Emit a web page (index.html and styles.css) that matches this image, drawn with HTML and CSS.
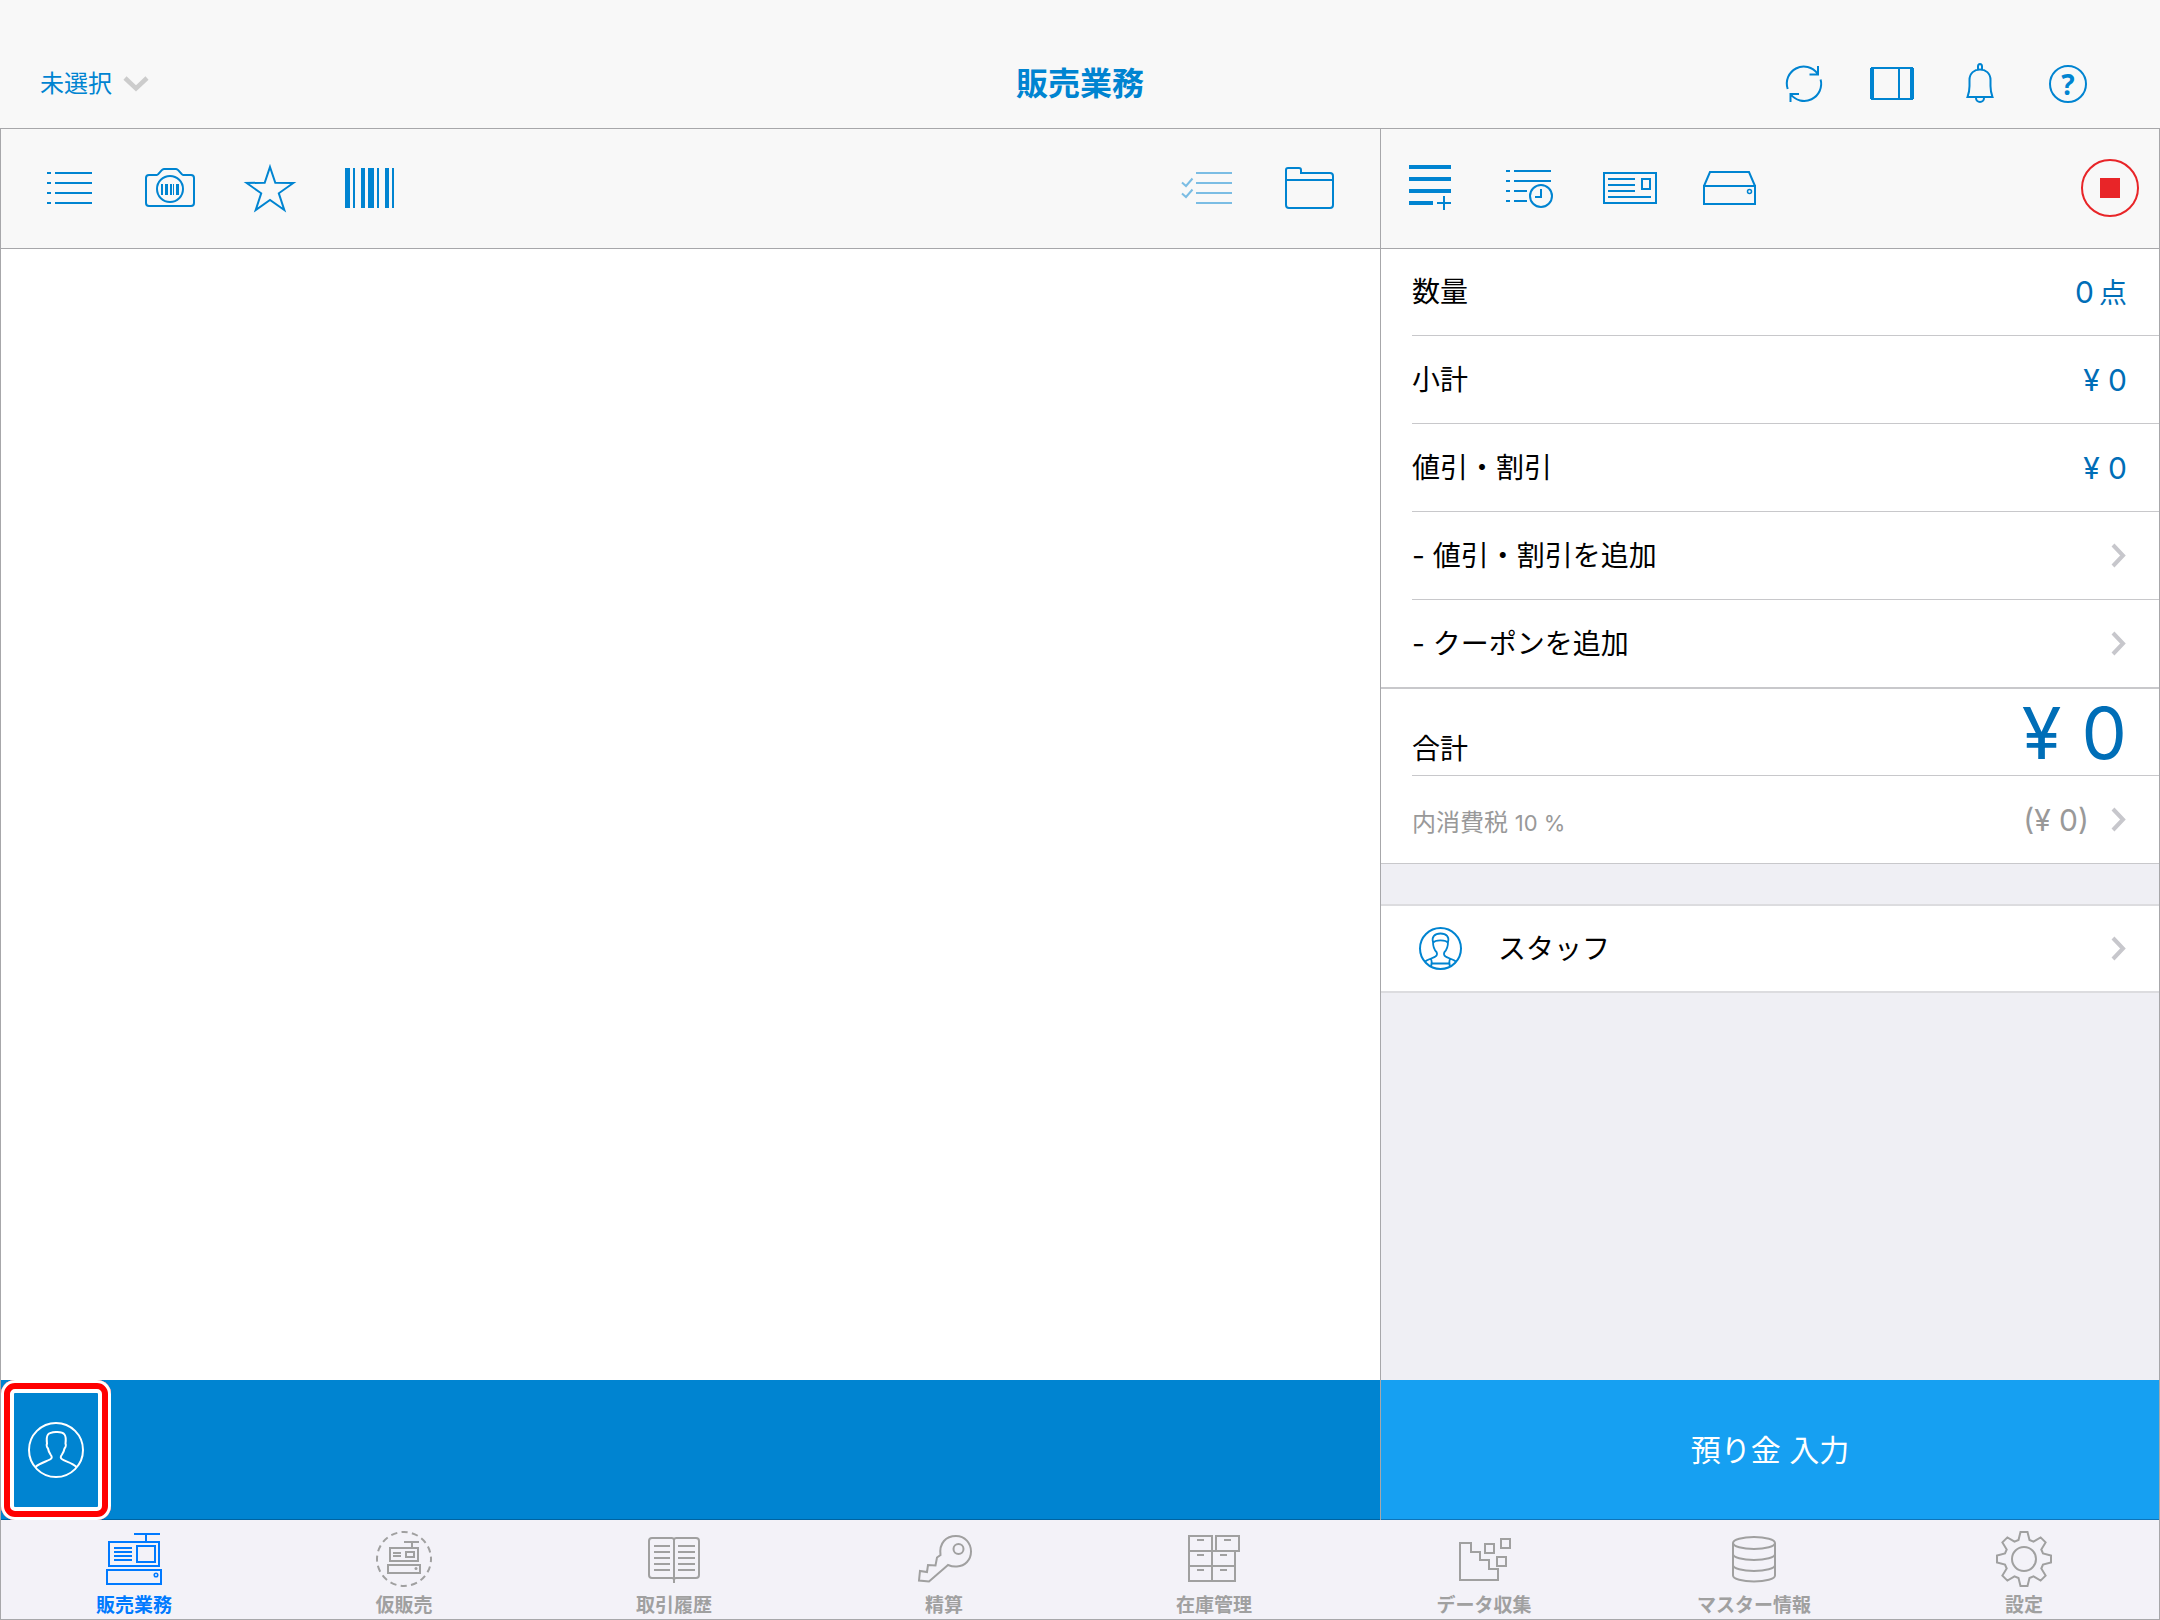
FILE: index.html
```html
<!DOCTYPE html>
<html lang="ja">
<head>
  <meta charset="UTF-8">
  <meta name="viewport" content="width=device-width, initial-scale=1.0">
  <title>販売業務</title>
  <link rel="stylesheet" href="styles.css">
</head>
<body>
  <!-- ヘッダー -->
  <header class="header">
    <button type="button" class="store-select">
      未選択
      <svg class="icon" width="26" height="20" viewBox="0 0 26 20"><path d="M2 4l11 10.500L24 4" stroke="#ccc" stroke-width="4.500"/></svg>
    </button>
    <h1 class="title">販売業務</h1>
    <div class="header-icons">
      <button type="button" aria-label="同期">
        <svg class="icon" width="48" height="48" viewBox="0 0 48 48"><path d="M7.700 29A17 17 0 0 1 37.500 13.500M38 6v8.500h-8.500M40.600 19.500A17 17 0 0 1 10.500 34M10.500 42v-8H19"/></svg>
      </button>
      <button type="button" aria-label="表示切替">
        <svg class="icon" width="48" height="48" viewBox="0 0 48 48"><path d="M4 8h40v31H4zM31 8v31"/><path d="M4 8v31M44 8v31" stroke-width="4"/></svg>
      </button>
      <button type="button" aria-label="お知らせ">
        <svg class="icon" width="48" height="48" viewBox="0 0 48 48"><path d="M22 9.500V6.500a2 2.500 0 0 1 4 0v3M11.500 37c1.500-4 2-7 2-11v-6c0-7 5-10.500 10.500-10.500S34.500 13 34.500 20v6c0 4 .5 7 2 11zM20 38a4 4 0 0 0 8 0"/></svg>
      </button>
      <button type="button" aria-label="ヘルプ">
        <svg class="icon" width="48" height="48" viewBox="0 0 48 48"><circle cx="24" cy="24" r="18"/><text class="help-mark" x="24" y="35" text-anchor="middle">?</text></svg>
      </button>
    </div>
  </header>

  <main class="main">
    <!-- 左側 : 商品リスト -->
    <section class="cart">
      <div class="toolbar">
        <button type="button" aria-label="リスト">
          <svg class="icon" width="60" height="60" viewBox="0 0 60 60"><path d="M7 15h4M15 15h37M7 25h4M15 25h37M7 35h4M15 35h37M7 45h4M15 45h37"/></svg>
        </button>
        <button type="button" aria-label="カメラ">
          <svg class="icon" width="60" height="60" viewBox="0 0 60 60"><path d="M9 17h8c2 0 4-6 7-6h12c3 0 5 6 7 6h8a3 3 0 0 1 3 3v25a3 3 0 0 1-3 3H9a3 3 0 0 1-3-3V20a3 3 0 0 1 3-3z"/><circle cx="30" cy="31" r="13"/><path class="fill" d="M21 26h2v11h-2zM25 26h3v11h-3zM30 26h2v11h-2zM33 26h1v11h-1zM36 26h3v11h-3z"/></svg>
        </button>
        <button type="button" aria-label="お気に入り">
          <svg class="icon" width="60" height="60" viewBox="0 0 60 60"><path d="M30 9l5.300 15.700 18 .3-14.500 10.300L44.300 52 30 42 15.700 52l5.500-16.700L6.700 25l18-.3z"/></svg>
        </button>
        <button type="button" aria-label="バーコード">
          <svg class="icon" width="60" height="60" viewBox="0 0 60 60"><path class="fill" d="M5 10h5v40H5zM13 10h2v40h-2zM21 10h4v40h-4zM28 10h6v40h-6zM37 10h2v40h-2zM45 10h4v40h-4zM52 10h2v40h-2z"/></svg>
        </button>
        <span class="spacer"></span>
        <button type="button" aria-label="一括選択" disabled>
          <svg class="icon" width="60" height="60" viewBox="0 0 60 60"><path d="M16 15h36M16 25h36M16 35h36M16 45h36"/><path d="M2 24.500l4 3.500 6.500-7.500M2 35.500L6 39l6.500-7.500"/></svg>
        </button>
        <button type="button" aria-label="フォルダ">
          <svg class="icon" width="60" height="60" viewBox="0 0 60 60"><path d="M6 12a2 2 0 0 1 2-2h11a2 2 0 0 1 2 2v3h29a3 3 0 0 1 3 3v29a3 3 0 0 1-3 3H9a3 3 0 0 1-3-3zM6 22h47"/></svg>
        </button>
      </div>
      <div class="items"></div>
      <div class="customer-bar">
        <button type="button" class="customer-btn" aria-label="会員">
          <svg class="icon" width="56" height="56" viewBox="0 0 56 56"><circle cx="28" cy="28" r="27"/><path d="M7.500 45c4-4 11-5.500 14.500-7.500 2.500-1.500 2-3 .5-5-1-1.500-2-3-2.500-6-1.500-1.500-1.500-4-1-5-.5-4-.5-7 1-9 2-2.500 13.500-4 16.500 0 1.500 2 1.500 5 1 9 .5 1 .5 3.500-1 5-.5 3-1.500 4.500-2.500 6-1.500 2-2 3.500.5 5C37.500 39.500 44.500 41 48.500 45"/></svg>
        </button>
      </div>
    </section>

    <!-- 右側 : 会計 -->
    <aside class="checkout">
      <div class="toolbar">
        <button type="button" aria-label="明細追加">
          <svg class="icon" width="60" height="60" viewBox="0 0 60 60"><path d="M9 9h42M9 21h42M9 33h42M9 45h24" stroke-width="4"/><path d="M37 45h14M44 38v14"/></svg>
        </button>
        <button type="button" aria-label="保留履歴">
          <svg class="icon" width="60" height="60" viewBox="0 0 60 60"><path d="M6 13h4M14 13h37M6 23h4M14 23h37M6 33h4M14 33h13M6 43h4M14 43h13M41 31v8h-6"/><circle cx="41" cy="38" r="11"/></svg>
        </button>
        <button type="button" aria-label="伝票">
          <svg class="icon" width="60" height="60" viewBox="0 0 60 60"><path d="M4 15h52v30H4zM8 21h27M8 27h27M8 33h27M8 39h43M42 21h8v10h-8z"/></svg>
        </button>
        <button type="button" aria-label="ドロア">
          <svg class="icon" width="60" height="60" viewBox="0 0 60 60"><path d="M4 28v18h51V28zM4 28l6-14h39l6 14"/><circle cx="49.500" cy="33.500" r="2" stroke-width="1.500"/></svg>
        </button>
        <span class="spacer"></span>
        <button type="button" class="stop-btn" aria-label="中止">
          <svg class="icon" width="60" height="60" viewBox="0 0 60 60"><circle cx="30" cy="30" r="28"/><path class="fill" d="M20 20h20v20H20z"/></svg>
        </button>
      </div>

      <div class="group group-lines">
        <div class="row"><span>数量</span><span class="value">0<small>点</small></span></div>
        <div class="row"><span>小計</span><span class="value">¥ 0</span></div>
        <div class="row"><span>値引・割引</span><span class="value">¥ 0</span></div>
        <button type="button" class="row">
          <span>- 値引・割引を追加</span>
          <svg class="icon chevron" width="16" height="25" viewBox="0 0 16 25"><path d="M2 2l10 10.500L2 23"/></svg>
        </button>
        <button type="button" class="row">
          <span>- クーポンを追加</span>
          <svg class="icon chevron" width="16" height="25" viewBox="0 0 16 25"><path d="M2 2l10 10.500L2 23"/></svg>
        </button>
      </div>

      <div class="group">
        <div class="row row-total"><span>合計</span><span class="value total">¥ 0</span></div>
        <button type="button" class="row row-tax">
          <span class="tax">
            <span>内消費税 <small>10 %</small></span>
            <span class="tax-value">(¥ 0)</span>
          </span>
          <svg class="icon chevron" width="16" height="25" viewBox="0 0 16 25"><path d="M2 2l10 10.500L2 23"/></svg>
        </button>
      </div>

      <button type="button" class="staff">
        <svg class="icon" width="43" height="43" viewBox="0 0 43 43"><circle cx="21.500" cy="21.500" r="20.500"/><path d="M14 15c-1.500-5 1.500-8.500 7.500-8.500S30.500 10 29 15c0 5-1.500 8-3.500 10-1 1.500-.5 3.500 1 4.500 3 2 8 2.500 11 5.500M14 15c0 5 1.500 8 3.500 10 1 1.500.5 3.500-1 4.500-3 2-8 2.500-11 5.500M14 16c2-3.500 13-3.500 15 0M12 31c1 3 1 6 0 9M31 31c-1 3-1 6 0 9M12.500 36.500h18" stroke-width="1.800"/></svg>
        <span class="staff-name">スタッフ</span>
        <svg class="icon chevron" width="16" height="25" viewBox="0 0 16 25"><path d="M2 2l10 10.500L2 23"/></svg>
      </button>

      <button type="button" class="pay-btn">預り金 入力</button>
    </aside>
  </main>

  <!-- タブバー -->
  <nav class="tabbar">
    <a href="#" class="tab active">
      <svg class="icon" width="56" height="56" viewBox="0 0 56 56"><path d="M28 3h26M40 4v7M3 11h50v24H3zM8 17h18M8 21h18M8 25h18M8 29h18M31 15h18v16H31zM1 39h54v14H1z"/><circle cx="50" cy="44" r="1.800" stroke-width="1.500"/></svg>
      販売業務
    </a>
    <a href="#" class="tab">
      <svg class="icon" width="56" height="56" viewBox="0 0 56 56"><circle cx="28" cy="28" r="27" stroke-dasharray="6.300 4.300" stroke-dashoffset="3"/><path d="M28 11h15M36 12v5M14 17h28v13H14zM17 22h8M17 25h8M30 21h8v5h-8zM12 34h32v8H12z"/><circle class="fill" cx="40" cy="37.500" r="1.500"/></svg>
      仮販売
    </a>
    <a href="#" class="tab">
      <svg class="icon" width="56" height="56" viewBox="0 0 56 56"><path d="M28 9c0-1.500-1-2-2.500-2H6a3 3 0 0 0-3 3v34a3 3 0 0 0 3 3h20c1.500 0 2 .5 2 2 0-1.500.5-2 2-2h20a3 3 0 0 0 3-3V10a3 3 0 0 0-3-3H30.500C29 7 28 7.500 28 9zM28 9v43M8 15h16M8 21h16M8 27h16M8 33h16M8 39h16M32 15h17M32 21h17M32 27h17M32 33h17M32 39h17"/></svg>
      取引履歴
    </a>
    <a href="#" class="tab">
      <svg class="icon" width="56" height="56" viewBox="0 0 56 56"><path d="M32 34L13 50.500l-10-1L4 40l7 1 1-7 7.500.5L21 26.500l3.500-2.500C23 12 30 5 40 5c9 0 15 7 15 15.500S49 35 41 35.500c-3.500.5-6.500-.5-9-1.500z"/><circle cx="42.500" cy="18" r="5"/></svg>
      精算
    </a>
    <a href="#" class="tab">
      <svg class="icon" width="56" height="56" viewBox="0 0 56 56"><path d="M3 5h23v15H3zM30 5h23v15H30zM3 20h46v30H3zM3 35h46M26 20v30M11 9h7M38 9h7M11 24h7M34 24h7M11 39h7M34 39h7"/></svg>
      在庫管理
    </a>
    <a href="#" class="tab">
      <svg class="icon" width="56" height="56" viewBox="0 0 56 56"><path d="M4 12h11v9h9v8h9v9h9v11H4zM29 13h9v9h-9zM45 8h9v9h-9zM41 26h9v9h-9z"/></svg>
      データ収集
    </a>
    <a href="#" class="tab">
      <svg class="icon" width="56" height="56" viewBox="0 0 56 56"><ellipse cx="28" cy="12" rx="21" ry="6"/><path d="M7 12v32.500c0 3.500 9.500 6 21 6s21-2.500 21-6V12M7 23c0 3.500 9.500 6 21 6s21-2.500 21-6M7 34c0 3.500 9.500 6 21 6s21-2.500 21-6"/></svg>
      マスター情報
    </a>
    <a href="#" class="tab">
      <svg class="icon" width="56" height="56" viewBox="0 0 56 56"><g transform="translate(28 28)"><path d="M-3.500-27H3.500L5.500-19 9.500-17.300 16.600-21.600 21.600-16.600 17.300-9.500 19-5.500 27-3.500V3.500L19 5.500 17.300 9.500 21.600 16.600 16.600 21.600 9.500 17.300 5.500 19 3.500 27H-3.500L-5.500 19-9.500 17.300-16.600 21.600-21.600 16.600-17.300 9.500-19 5.500-27 3.500V-3.500L-19-5.500-17.300-9.500-21.600-16.600-16.600-21.600-9.500-17.300-5.500-19z"/><circle r="12"/></g></svg>
      設定
    </a>
  </nav>
</body>
</html>
```

FILE: styles.css
```css
* {
  box-sizing: border-box;
}

body {
  margin: 0;
  min-height: 100vh;
  display: flex;
  flex-direction: column;
  font-family: Inter, "Noto Sans CJK JP", sans-serif;
  font-size: 28px;
  line-height: 1;
  color: #000;
  background-color: #f8f8f8;
}

button {
  margin: 0;
  padding: 0;
  border: none;
  background: none;
  font: inherit;
  color: inherit;
  cursor: pointer;
}

/* アイコン共通 */
.icon {
  display: block;
  flex: none;
  fill: none;
  stroke: currentColor;
  stroke-width: 2;
}

.icon .fill {
  fill: currentColor;
  stroke: none;
}

.chevron {
  color: #c7c7cc;
  stroke-width: 4;
}

.spacer {
  flex: 1;
}

/* ヘッダー */
.header {
  display: grid;
  grid-template-columns: 1fr auto 1fr;
  align-items: center;
  height: 128px;
  padding: 40px 40px 0;
  color: #0084d1;
}

.store-select {
  display: flex;
  align-items: center;
  justify-self: start;
  gap: 11px;
  font-size: 24px;
}

.title {
  margin: 0;
  font-size: 32px;
  font-weight: bold;
}

.header-icons {
  display: flex;
  justify-content: flex-end;
  padding-right: 8px;
}

.header-icons button {
  display: flex;
  align-items: center;
  justify-content: center;
  width: 88px;
  height: 88px;
}

.help-mark {
  font: bold 28px "Noto Sans", sans-serif;
  fill: currentColor;
  stroke: none;
}

/* メイン */
.main {
  flex: 1;
  display: grid;
  grid-template-columns: 1379fr 779fr;
  border: 1px solid #a7a7aa;
  border-bottom: none;
}

.cart,
.checkout {
  display: flex;
  flex-direction: column;
  min-width: 0;
}

.checkout {
  border-left: 1px solid #a7a7aa;
  background-color: #efeff4;
}

.toolbar {
  display: flex;
  gap: 2px;
  height: 120px;
  padding-bottom: 1px;
  border-bottom: 1px solid #a7a7aa;
  background-color: #f8f8f8;
  color: #0084d1;
}

.cart .toolbar {
  padding-left: 20px;
  padding-right: 21px;
}

.toolbar button {
  display: flex;
  align-items: center;
  justify-content: center;
  width: 98px;
}

.toolbar button:disabled {
  opacity: 0.5;
}

.toolbar .stop-btn {
  color: #e82528;
}

.items {
  flex: 1;
  background-color: #fff;
}

.customer-bar {
  height: 140px;
  background-color: #0084d1;
  border-bottom: 1px solid #0063a0;
}

.customer-btn {
  display: flex;
  align-items: center;
  justify-content: center;
  width: 110px;
  height: 140px;
  color: #fff;
  border-radius: 14px;
  box-shadow: inset 0 0 0 3px #fff, inset 0 0 0 9px #f00, inset 0 0 0 13px #fff;
}

/* 会計の明細 */
.group {
  padding-left: 31px;
  background-color: #fff;
  border-bottom: 1px solid #c8c8cb;
}

.group-lines {
  border-bottom-width: 2px;
}

.row {
  display: flex;
  align-items: center;
  justify-content: space-between;
  width: 100%;
  height: 88px;
  padding-right: 32px;
  border-bottom: 1px solid #c8c8cb;
  text-align: left;
}

.row:first-child {
  height: 87px;
}

.row:last-child {
  height: 87px;
  border-bottom: none;
}

.value {
  font-size: 30px;
  color: #006eb7;
}

.value small {
  margin-left: 5px;
  font-size: 28px;
}

.row-total {
  align-items: baseline;
}

.total {
  font-size: 72px;
  line-height: 87px;
}

.row-tax {
  color: #999;
  font-size: 24px;
}

.row-tax small {
  font-size: 22px;
}

.tax {
  flex: 1;
  display: flex;
  align-items: baseline;
  justify-content: space-between;
  margin-right: 22px;
}

.tax-value {
  font-size: 30px;
}

.staff {
  display: flex;
  align-items: center;
  height: 89px;
  margin-top: 40px;
  padding: 0 32px 0 38px;
  border-top: 2px solid #dcdcdf;
  border-bottom: 2px solid #dcdcdf;
  background-color: #fff;
}

.staff .icon:first-child {
  color: #0084d1;
}

.staff-name {
  flex: 1;
  margin-left: 36px;
  text-align: left;
}

.pay-btn {
  height: 140px;
  margin-top: auto;
  border-bottom: 1px solid #0f74b8;
  background-color: #16a0f2;
  color: #fff;
  font-size: 30px;
}

/* タブバー */
.tabbar {
  display: grid;
  grid-template-columns: repeat(8, 1fr);
  height: 100px;
  background-color: #f3f2f8;
  box-shadow: inset 1px 0 #a7a7aa, inset -1px -1px #a7a7aa;
}

.tab {
  display: flex;
  flex-direction: column;
  align-items: center;
  gap: 5px;
  padding: 11px 2px 0 0;
  color: #a0a0a0;
  font-size: 19px;
  font-weight: bold;
  line-height: 28px;
  text-decoration: none;
}

.tab.active {
  color: #007aff;
}
```
